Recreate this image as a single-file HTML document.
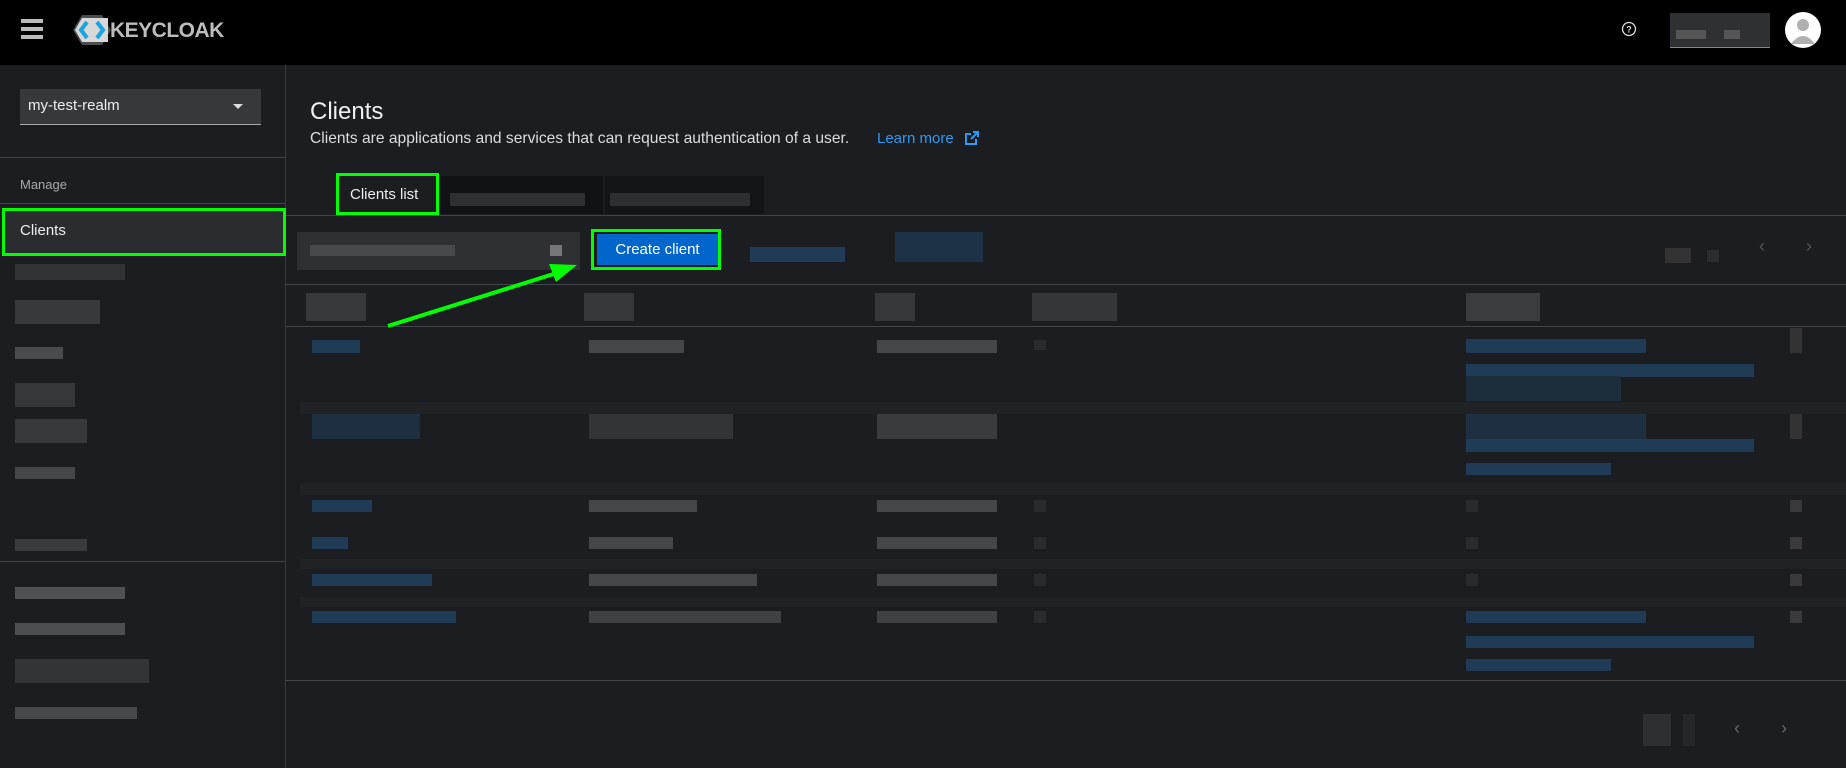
<!DOCTYPE html>
<html><head><meta charset="utf-8"><style>
*{margin:0;padding:0;box-sizing:border-box}
body{width:1846px;height:768px;background:#1b1d21;font-family:"Liberation Sans",sans-serif;color:#e0e0e0;position:relative;overflow:hidden}
.a{position:absolute}
.g{position:absolute;background:#3f4044}
.b{position:absolute;background:#1f3b55}
.line{position:absolute;height:1px;background:#444548}
</style></head><body>
<div class="a" style="left:0;top:0;width:1846px;height:65px;background:#000"></div>
<div class="a" style="left:21px;top:19px;width:22px;height:4px;background:#bbb"></div>
<div class="a" style="left:21px;top:27px;width:22px;height:4px;background:#bbb"></div>
<div class="a" style="left:21px;top:35px;width:22px;height:4px;background:#bbb"></div>
<svg class="a" style="left:72px;top:14px" width="40" height="32" viewBox="0 0 40 32"><polygon points="10,1 30,1 39,16 30,31 10,31 1,16" fill="#4d4d4d"/><polygon points="3,16 10,4 36,4 36,28 10,28" fill="#d8d8d8"/><path d="M15,8 L9,16 L15,24 M25,8 L31,16 L25,24" stroke="#19a3e0" stroke-width="4" fill="none"/></svg>
<div class="a" style="left:110px;top:19px;font-size:21px;font-weight:bold;color:#bdbdbd;letter-spacing:-0.5px">KEYCLOAK</div>
<svg class="a" style="left:1621px;top:21px" width="16" height="16" viewBox="0 0 16 16"><circle cx="8" cy="8" r="6.5" stroke="#ddd" stroke-width="1.3" fill="none"/><text x="8" y="11.5" font-size="9" text-anchor="middle" fill="#ddd" font-family="Liberation Sans" font-weight="bold">?</text></svg>
<div class="a" style="left:1670px;top:13px;width:100px;height:35px;background:#2f3033;border-bottom:1px solid #888"></div>
<div class="g" style="left:1676px;top:30px;width:30px;height:9px;background:#555"></div>
<div class="g" style="left:1724px;top:30px;width:16px;height:9px;background:#555"></div>
<svg class="a" style="left:1785px;top:12px" width="36" height="36" viewBox="0 0 36 36"><circle cx="18" cy="18" r="18" fill="#fff"/><circle cx="18" cy="13" r="6" fill="#b0b0b0"/><path d="M6,32 Q18,16 30,32 Z" fill="#b0b0b0"/></svg>

<div class="a" style="left:285px;top:65px;width:1px;height:703px;background:#3a3b3e"></div>
<div class="a" style="left:20px;top:89px;width:241px;height:36px;background:#36383b;border-bottom:1px solid #aaa"></div>
<div class="a" style="left:28px;top:97px;font-size:15px;color:#eee">my-test-realm</div>
<div class="a" style="left:233px;top:104px;width:0;height:0;border-left:5px solid transparent;border-right:5px solid transparent;border-top:5px solid #ddd"></div>
<div class="line" style="left:0;top:157px;width:285px"></div>
<div class="a" style="left:20px;top:177px;font-size:13px;color:#aaa">Manage</div>
<div class="line" style="left:0;top:203px;width:285px"></div>
<div class="a" style="left:2px;top:208px;width:284px;height:48px;background:#2a2c30;border:3px solid #0f0"></div>
<div class="a" style="left:20px;top:222px;font-size:15px;color:#eee">Clients</div>
<div class="g" style="left:15px;top:264px;width:110px;height:16px;background:#303236"></div>
<div class="g" style="left:15px;top:300px;width:85px;height:24px;background:#38393d"></div>
<div class="g" style="left:15px;top:347px;width:48px;height:12px;background:#4a4b4f"></div>
<div class="g" style="left:15px;top:383px;width:60px;height:24px;background:#36373b"></div>
<div class="g" style="left:15px;top:419px;width:72px;height:24px;background:#38393d"></div>
<div class="g" style="left:15px;top:467px;width:60px;height:12px;background:#45464a"></div>
<div class="g" style="left:15px;top:539px;width:72px;height:12px;background:#3a3b3f"></div>
<div class="line" style="left:0;top:561px;width:285px"></div>
<div class="g" style="left:15px;top:587px;width:110px;height:12px;background:#505155"></div>
<div class="g" style="left:15px;top:623px;width:110px;height:12px;background:#4d4e52"></div>
<div class="g" style="left:15px;top:659px;width:134px;height:24px;background:#333438"></div>
<div class="g" style="left:15px;top:707px;width:122px;height:12px;background:#48494d"></div>

<div class="a" style="left:310px;top:98px;font-size:24px;color:#f0f0f0">Clients</div>
<div class="a" style="left:310px;top:130px;font-size:15.6px;color:#ddd">Clients are applications and services that can request authentication of a user.</div>
<div class="a" style="left:877px;top:130px;font-size:15px;color:#2b9af3">Learn more</div>
<svg class="a" style="left:964px;top:130px" width="16" height="16" viewBox="0 0 16 16"><path d="M12,9 V14 H2 V4 H7 M9,2 H14 V7 M14,2 L7,9" stroke="#2b9af3" stroke-width="2" fill="none"/></svg>

<div class="a" style="left:336px;top:173px;width:103px;height:42px;border:3px solid #0f0"></div>
<div class="a" style="left:350px;top:186px;font-size:15px;color:#eee">Clients list</div>
<div class="a" style="left:440px;top:176px;width:163px;height:38px;background:#111215"></div>
<div class="a" style="left:605px;top:176px;width:159px;height:38px;background:#131417"></div>
<div class="g" style="left:450px;top:193px;width:135px;height:13px;background:#2e2f32"></div>
<div class="g" style="left:610px;top:193px;width:140px;height:13px;background:#2e2f32"></div>
<div class="line" style="left:286px;top:215px;width:1560px"></div>

<div class="a" style="left:297px;top:232px;width:283px;height:38px;background:#2f3033"></div>
<div class="g" style="left:310px;top:245px;width:145px;height:11px;background:#48494d"></div>
<div class="g" style="left:550px;top:245px;width:12px;height:11px;background:#777"></div>
<div class="a" style="left:591px;top:229px;width:130px;height:41px;border:3px solid #0f0"></div>
<div class="a" style="left:597px;top:234px;width:121px;height:31px;background:#0066cc"></div>
<div class="a" style="left:597px;top:241px;width:121px;text-align:center;font-size:15px;color:#fff">Create client</div>
<div class="b" style="left:750px;top:247px;width:95px;height:15px"></div>
<div class="b" style="left:895px;top:232px;width:88px;height:30px;background:#1d3247"></div>
<div class="g" style="left:1665px;top:248px;width:26px;height:15px;background:#333"></div>
<div class="g" style="left:1707px;top:250px;width:12px;height:12px;background:#2c2d30"></div>
<div class="a" style="left:1759px;top:236px;color:#555;font-size:18px">‹</div>
<div class="a" style="left:1806px;top:236px;color:#555;font-size:18px">›</div>

<div class="line" style="left:286px;top:284px;width:1560px"></div>
<div class="g" style="left:306px;top:293px;width:60px;height:28px;background:#38393d"></div>
<div class="g" style="left:584px;top:293px;width:50px;height:28px;background:#36373b"></div>
<div class="g" style="left:875px;top:293px;width:40px;height:28px;background:#36373b"></div>
<div class="g" style="left:1032px;top:293px;width:85px;height:28px;background:#35363a"></div>
<div class="g" style="left:1466px;top:293px;width:74px;height:28px;background:#3b3c40"></div>
<div class="line" style="left:286px;top:326px;width:1560px"></div>

<div class="a" style="left:300px;top:402px;width:1546px;height:12px;background:#202226"></div>
<div class="a" style="left:300px;top:483px;width:1546px;height:12px;background:#202226"></div>
<div class="a" style="left:300px;top:559px;width:1546px;height:10px;background:#202226"></div>
<div class="a" style="left:300px;top:597px;width:1546px;height:10px;background:#202226"></div>

<div class="b" style="left:312px;top:340px;width:48px;height:13px"></div>
<div class="g" style="left:589px;top:340px;width:95px;height:13px;background:#45464a"></div>
<div class="g" style="left:877px;top:340px;width:120px;height:13px;background:#45464a"></div>
<div class="g" style="left:1034px;top:340px;width:12px;height:10px;background:#2a2b2e"></div>
<div class="b" style="left:1466px;top:339px;width:180px;height:14px"></div>
<div class="b" style="left:1466px;top:364px;width:288px;height:13px"></div>
<div class="b" style="left:1466px;top:376px;width:155px;height:25px;background:#1d2d3c"></div>
<div class="g" style="left:1790px;top:328px;width:12px;height:25px;background:#333"></div>

<div class="b" style="left:312px;top:414px;width:108px;height:25px;background:#1d2f40"></div>
<div class="g" style="left:589px;top:414px;width:144px;height:25px;background:#333438"></div>
<div class="g" style="left:877px;top:414px;width:120px;height:25px;background:#3a3b3f"></div>
<div class="b" style="left:1466px;top:414px;width:180px;height:25px;background:#1d2f40"></div>
<div class="b" style="left:1466px;top:439px;width:288px;height:13px"></div>
<div class="b" style="left:1466px;top:463px;width:145px;height:12px"></div>
<div class="g" style="left:1790px;top:414px;width:12px;height:25px;background:#333"></div>

<div class="b" style="left:312px;top:500px;width:60px;height:12px"></div>
<div class="g" style="left:589px;top:500px;width:108px;height:12px;background:#45464a"></div>
<div class="g" style="left:877px;top:500px;width:120px;height:12px;background:#45464a"></div>
<div class="g" style="left:1034px;top:500px;width:12px;height:12px;background:#2a2b2e"></div>
<div class="g" style="left:1466px;top:500px;width:12px;height:12px;background:#2a2b2e"></div>
<div class="g" style="left:1790px;top:500px;width:12px;height:12px;background:#3a3a3a"></div>

<div class="b" style="left:312px;top:537px;width:36px;height:12px"></div>
<div class="g" style="left:589px;top:537px;width:84px;height:12px;background:#45464a"></div>
<div class="g" style="left:877px;top:537px;width:120px;height:12px;background:#45464a"></div>
<div class="g" style="left:1034px;top:537px;width:12px;height:12px;background:#2a2b2e"></div>
<div class="g" style="left:1466px;top:537px;width:12px;height:12px;background:#2a2b2e"></div>
<div class="g" style="left:1790px;top:537px;width:12px;height:12px;background:#3a3a3a"></div>

<div class="b" style="left:312px;top:574px;width:120px;height:12px"></div>
<div class="g" style="left:589px;top:574px;width:168px;height:12px;background:#45464a"></div>
<div class="g" style="left:877px;top:574px;width:120px;height:12px;background:#45464a"></div>
<div class="g" style="left:1034px;top:574px;width:12px;height:12px;background:#2a2b2e"></div>
<div class="g" style="left:1466px;top:574px;width:12px;height:12px;background:#2a2b2e"></div>
<div class="g" style="left:1790px;top:574px;width:12px;height:12px;background:#3a3a3a"></div>

<div class="b" style="left:312px;top:611px;width:144px;height:12px"></div>
<div class="g" style="left:589px;top:611px;width:192px;height:12px;background:#404145"></div>
<div class="g" style="left:877px;top:611px;width:120px;height:12px;background:#404145"></div>
<div class="g" style="left:1034px;top:611px;width:12px;height:12px;background:#2a2b2e"></div>
<div class="b" style="left:1466px;top:611px;width:180px;height:12px"></div>
<div class="b" style="left:1466px;top:636px;width:288px;height:12px"></div>
<div class="b" style="left:1466px;top:659px;width:145px;height:12px"></div>
<div class="g" style="left:1790px;top:611px;width:12px;height:12px;background:#3a3a3a"></div>

<div class="line" style="left:286px;top:680px;width:1560px"></div>
<div class="g" style="left:1643px;top:714px;width:28px;height:32px;background:#2e2f32"></div>
<div class="g" style="left:1683px;top:714px;width:12px;height:32px;background:#26272a"></div>
<div class="a" style="left:1734px;top:718px;color:#666;font-size:18px">‹</div>
<div class="a" style="left:1781px;top:718px;color:#666;font-size:18px">›</div>

<svg class="a" style="left:0;top:0" width="1846" height="768"><line x1="388" y1="326" x2="560" y2="272" stroke="#0f0" stroke-width="4"/><polygon points="577,265 549,264 556,282" fill="#0f0"/></svg>
</body></html>
